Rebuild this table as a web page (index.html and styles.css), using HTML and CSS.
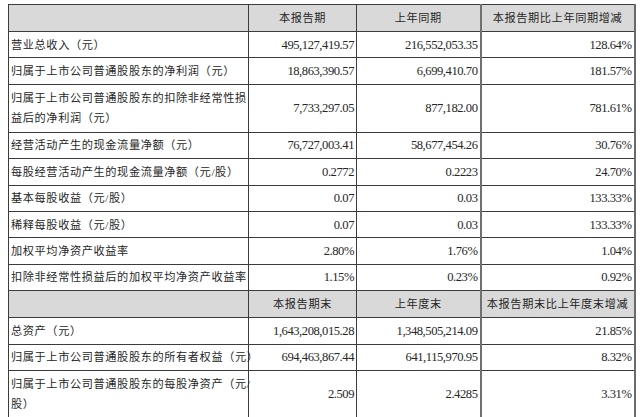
FILE: index.html
```html
<!DOCTYPE html>
<html lang="zh-CN">
<head>
<meta charset="utf-8">
<title>主要会计数据</title>
<link rel="stylesheet" href="styles.css">
</head>
<body>
<table class="fin">
  <colgroup>
    <col class="c1"><col class="c2"><col class="c3"><col class="c4">
  </colgroup>
  <tr class="head">
    <th></th><th>本报告期</th><th>上年同期</th><th class="last">本报告期比上年同期增减</th>
  </tr>
  <tr>
    <td class="label">营业总收入（元）</td><td>495,127,419.57</td><td>216,552,053.35</td><td class="last">128.64%</td>
  </tr>
  <tr>
    <td class="label">归属于上市公司普通股股东的净利润（元）</td><td>18,863,390.57</td><td>6,699,410.70</td><td class="last">181.57%</td>
  </tr>
  <tr class="tall">
    <td class="label">归属于上市公司普通股股东的扣除非经常性损<br>益后的净利润（元）</td><td>7,733,297.05</td><td>877,182.00</td><td class="last">781.61%</td>
  </tr>
  <tr>
    <td class="label">经营活动产生的现金流量净额（元）</td><td>76,727,003.41</td><td>58,677,454.26</td><td class="last">30.76%</td>
  </tr>
  <tr>
    <td class="label">每股经营活动产生的现金流量净额（元/股）</td><td>0.2772</td><td>0.2223</td><td class="last">24.70%</td>
  </tr>
  <tr>
    <td class="label">基本每股收益（元/股）</td><td>0.07</td><td>0.03</td><td class="last">133.33%</td>
  </tr>
  <tr>
    <td class="label">稀释每股收益（元/股）</td><td>0.07</td><td>0.03</td><td class="last">133.33%</td>
  </tr>
  <tr>
    <td class="label">加权平均净资产收益率</td><td>2.80%</td><td>1.76%</td><td class="last">1.04%</td>
  </tr>
  <tr>
    <td class="label">扣除非经常性损益后的加权平均净资产收益率</td><td>1.15%</td><td>0.23%</td><td class="last">0.92%</td>
  </tr>
  <tr class="head">
    <th></th><th>本报告期末</th><th>上年度末</th><th class="last">本报告期末比上年度末增减</th>
  </tr>
  <tr>
    <td class="label">总资产（元）</td><td>1,643,208,015.28</td><td>1,348,505,214.09</td><td class="last">21.85%</td>
  </tr>
  <tr>
    <td class="label">归属于上市公司普通股股东的所有者权益（元）</td><td>694,463,867.44</td><td>641,115,970.95</td><td class="last">8.32%</td>
  </tr>
  <tr class="tall">
    <td class="label">归属于上市公司普通股股东的每股净资产（元/<br>股）</td><td>2.509</td><td>2.4285</td><td class="last">3.31%</td>
  </tr>
</table>
</body>
</html>
```
FILE: styles.css
```css
html, body {
  margin: 0;
  background: #ffffff;
}
body {
  padding: 4px 0 0 8px;
}
.fin {
  border-collapse: collapse;
  table-layout: fixed;
  width: 626px;
  font-family: "Liberation Serif", "Noto Sans CJK SC", serif;
  color: #262626;
  border-right: 2px solid #6a6a6a;
}
.c1 { width: 240px; }
.c2 { width: 108px; }
.c3 { width: 124px; }
.c4 { width: 154px; }
.fin th,
.fin td {
  border: 1px solid #3c3c3c;
  padding: 0 2px;
  height: 25.4px;
  font-size: 12.6px;
  letter-spacing: -0.45px;
  text-align: right;
  vertical-align: middle;
  white-space: nowrap;
  line-height: 20px;
}
.fin .last {
  border-left: 2px solid #707070;
}
.fin .head th {
  background: #d9d9d9;
  font-weight: normal;
  text-align: center;
  font-size: 11.2px;
  letter-spacing: 0.6px;
  height: 26px;
}
.fin td.label {
  text-align: left;
  font-size: 11.2px;
  letter-spacing: 0.6px;
  padding-left: 2px;
}
.fin .tall td {
  height: 47px;
}
```
